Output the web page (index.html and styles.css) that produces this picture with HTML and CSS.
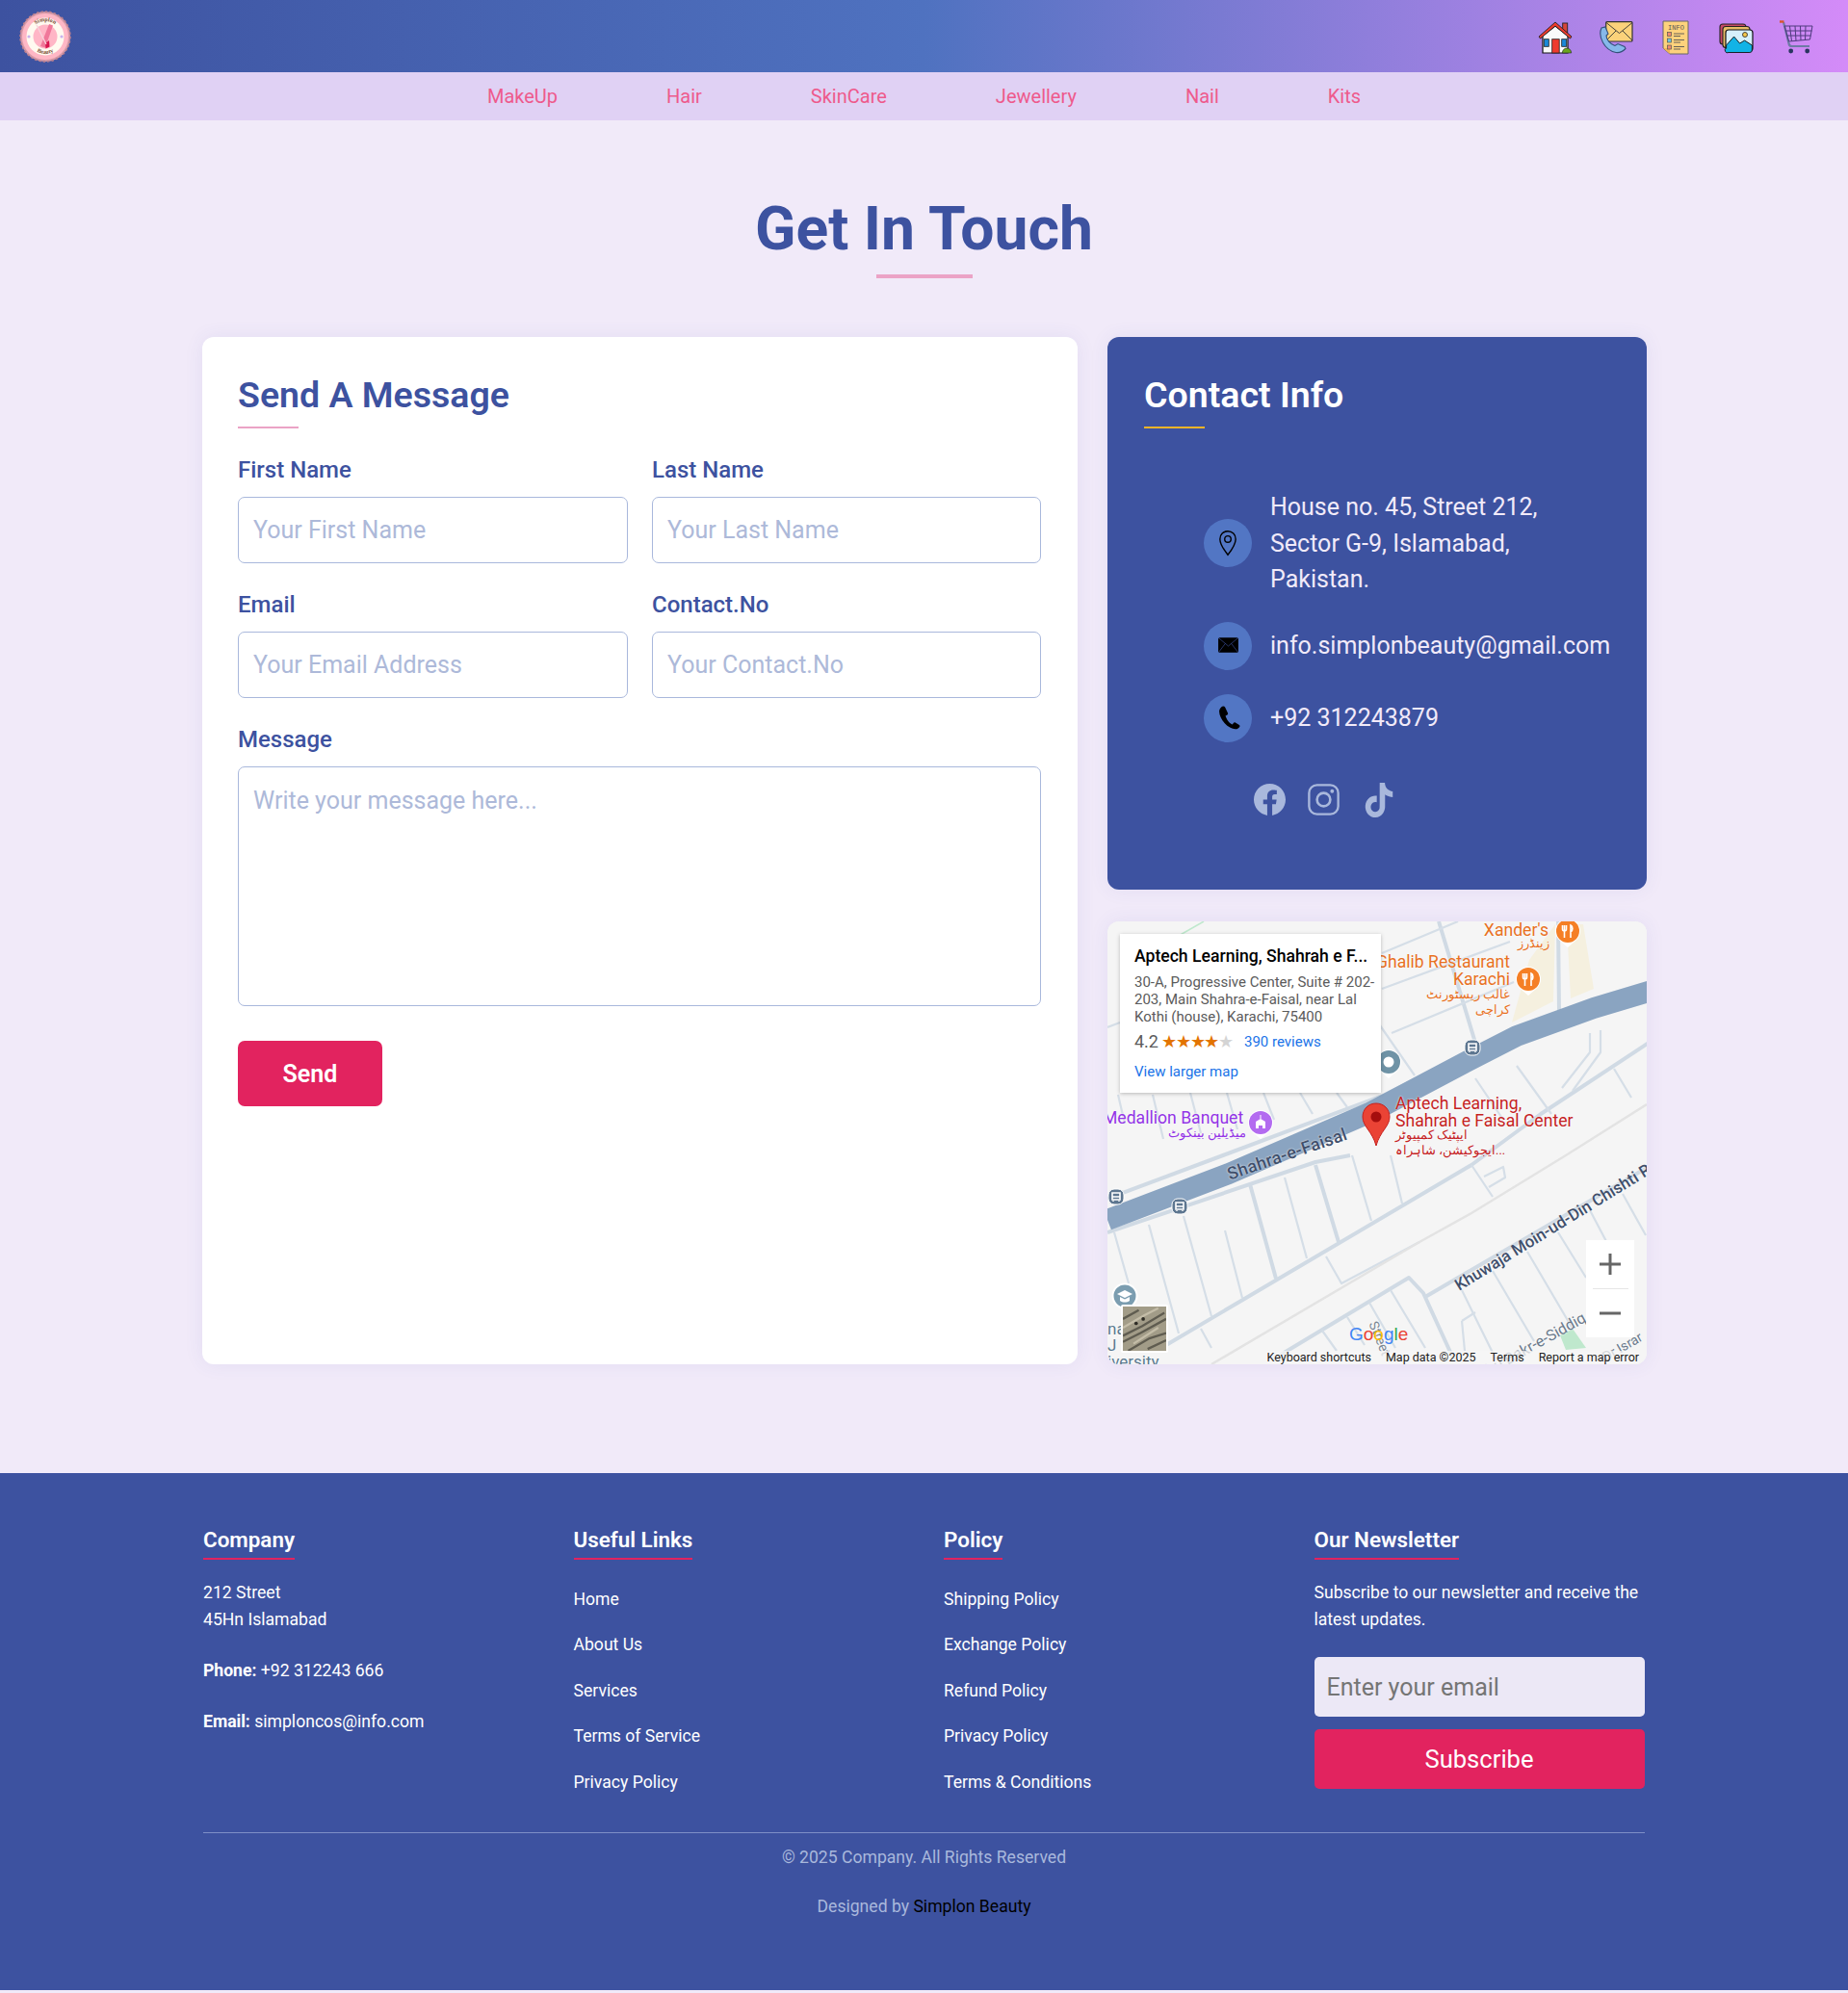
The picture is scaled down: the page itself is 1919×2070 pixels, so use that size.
FILE: index.html
```html
<!DOCTYPE html>
<html lang="en">
<head>
<meta charset="utf-8">
<title>Contact</title>
<link rel="stylesheet" href="styles.css">
</head>
<body>
<header class="topbar">
  <a class="logo" href="#" aria-label="Simplon Beauty">
    <svg viewBox="0 0 54 54" width="54" height="54">
      <defs>
        <path id="arcTop" d="M11 27a16 16 0 0 1 32 0"/>
        <path id="arcBot" d="M9 27a18 18 0 0 0 36 0"/>
      </defs>
      <circle cx="27" cy="27" r="26" fill="#d79aa8" stroke="#b97f8e" stroke-width="1.500" stroke-dasharray="2.500 2"/>
      <circle cx="27" cy="27" r="24" fill="#ffb7c5"/>
      <circle cx="27" cy="27" r="19.500" fill="#fffaf0"/>
      <circle cx="27" cy="27" r="12.500" fill="#ffb6c6"/>
      <path d="M31 14l4 1.500-8 23-5-1.500z" fill="#f0789a"/>
      <path d="M27 34l4-3 .5 6.500-4 2z" fill="#d8174f"/>
      <path d="M18 15l10 20" stroke="#f7d4dc" stroke-width="1.200" fill="none"/>
      <text class="logo-text"><textPath href="#arcTop" startOffset="50%">Simplon</textPath></text>
      <text class="logo-text"><textPath href="#arcBot" startOffset="50%">Beauty</textPath></text>
      <circle cx="10" cy="27" r="1.600" fill="#c9b2ee"/>
      <circle cx="44" cy="27" r="1.600" fill="#c9b2ee"/>
    </svg>
  </a>
  <nav class="topicons">
    <a href="#" aria-label="Home"><svg viewBox="0 0 36 36" width="36" height="36">
      <rect x="25.700" y="3" width="5" height="10" fill="#d6453a" stroke="#222" stroke-width=".9"/>
      <path d="M5 16v18h26V16L18 6z" fill="#fafafa" stroke="#111" stroke-width="1.200"/>
      <path d="M1 17L18 2l17 15-1.500 2L18 6 2.500 19z" fill="#ef3b2d" stroke="#222" stroke-width=".9"/>
      <rect x="14.700" y="19.700" width="7.500" height="14.300" fill="#ef3b2d" stroke="#222" stroke-width=".8"/>
      <rect x="6.300" y="19.700" width="5" height="7.600" fill="#1b88d8" stroke="#222" stroke-width=".8"/>
      <rect x="24.700" y="19.700" width="5" height="7.600" fill="#1b88d8" stroke="#222" stroke-width=".8"/>
      <path d="M25.300 34a4.700 5 0 0 1 9.400 0z" fill="#6aa51d" stroke="#222" stroke-width=".6"/>
    </svg></a>
    <a href="#" aria-label="Contact"><svg viewBox="0 0 36 36" width="36" height="36">
      <rect x="7.700" y="1.700" width="27.300" height="20.300" rx="1" fill="#fbd27a" stroke="#333" stroke-width="1.200"/>
      <path d="M8 2.500l13.500 11L35 2.500M8 21l10-10M35 21L25 11" fill="none" stroke="#333" stroke-width=".9"/>
      <path d="M3 8C-1 17 6 31 18 33.500c3 .5 7-1 10-4l-1-2-7-3-3 2C12 25 8 20 8 16l2-2-3-7z" fill="#86b8ea" stroke="#33507a" stroke-width="1.100"/>
    </svg></a>
    <a href="#" aria-label="Info"><svg viewBox="0 0 36 36" width="36" height="36">
      <path d="M5 1h26v34H12l-7-6z" fill="#fdd27c" stroke="#666" stroke-width="1"/>
      <path d="M5 29h7v6z" fill="#f3b458"/>
      <text class="info-text" x="18.500" y="9.500">INFO</text>
      <rect x="9.500" y="12.500" width="4" height="4" fill="#f08a70" stroke="#555" stroke-width=".7"/>
      <rect x="9.500" y="19" width="4" height="4" fill="#6fc7de" stroke="#555" stroke-width=".7"/>
      <rect x="9.500" y="26" width="4" height="4" fill="#f08a70" stroke="#555" stroke-width=".7"/>
      <path d="M16 14h11M16 16.500h7M16 20.500h11M16 23h7M16 27.500h11M16 30h7" stroke="#555" stroke-width=".9"/>
    </svg></a>
    <a href="#" aria-label="Gallery"><svg viewBox="0 0 36 36" width="36" height="36">
      <rect x="1" y="4" width="27" height="21" rx="3" fill="#c84a66" stroke="#222" stroke-width="1.100"/>
      <rect x="4" y="6.500" width="28" height="22" rx="3" fill="#e7bd66" stroke="#222" stroke-width="1.100"/>
      <rect x="7" y="10" width="28" height="22" rx="3" fill="#d6f0fb" stroke="#111" stroke-width="1.200"/>
      <path d="M7.600 29V26l8-9 6 7 5-3 7.800 5v5a2.500 2.500 0 0 1-2.500 2.500H10A2.500 2.500 0 0 1 7.600 29z" fill="#12b3e6" stroke="#111" stroke-width=".9"/>
      <circle cx="27" cy="15" r="2.500" fill="#f5c84b" stroke="#222" stroke-width=".8"/>
    </svg></a>
    <a href="#" aria-label="Cart"><svg viewBox="0 0 36 36" width="36" height="36">
      <path d="M5 2l5.500 22c.3 2 1 3 3 3H32" fill="none" stroke="#6e7aa6" stroke-width="2.200"/>
      <path d="M1 1.500h4.500" stroke="#d9552c" stroke-width="2.400"/>
      <path d="M6 6h29l-2.500 14-22 2zM11.500 6l2 15.700M17 6l1 15.300M22.500 6l.5 15M28 6l-.5 14.500M7.500 11h27M8.700 16h24.800" fill="none" stroke="#4e3a7e" stroke-width="1"/>
      <circle cx="12.700" cy="32" r="2.400" fill="#2a3560"/>
      <circle cx="29.700" cy="32" r="2.400" fill="#2a3560"/>
    </svg></a>
  </nav>
</header>
<nav class="catnav">
  <a href="#">MakeUp</a>
  <a href="#">Hair</a>
  <a href="#">SkinCare</a>
  <a href="#">Jewellery</a>
  <a href="#">Nail</a>
  <a href="#">Kits</a>
</nav>
<main class="contact">
  <h1 class="page-title">Get In Touch</h1>
  <div class="grid">
    <section class="card form-card">
      <h2 class="card-title">Send A Message</h2>
      <form class="form">
        <div class="field"><label>First Name</label><input type="text" placeholder="Your First Name"></div>
        <div class="field"><label>Last Name</label><input type="text" placeholder="Your Last Name"></div>
        <div class="field"><label>Email</label><input type="text" placeholder="Your Email Address"></div>
        <div class="field"><label>Contact.No</label><input type="text" placeholder="Your Contact.No"></div>
        <div class="field wide"><label>Message</label><textarea placeholder="Write your message here..."></textarea></div>
        <div class="wide"><button type="button" class="send">Send</button></div>
      </form>
    </section>
    <div class="side">
      <section class="card info-card">
        <h2 class="card-title light">Contact Info</h2>
        <ul class="info-list">
          <li><span class="bubble"><svg viewBox="0 0 24 24" width="28" height="28"><path d="M12 1.500C8 1.500 5 4.500 5 8.500c0 5 7 14 7 14s7-9 7-14c0-4-3-7-7-7z" fill="none" stroke="#000" stroke-width="1.200"/><circle cx="12" cy="8.500" r="2.800" fill="none" stroke="#000" stroke-width="1.200"/></svg></span><span>House no. 45, Street 212,<br>Sector G-9, Islamabad,<br>Pakistan.</span></li>
          <li><span class="bubble"><svg viewBox="0 0 24 24" width="25" height="25"><rect x="2" y="4" width="20" height="15" rx="1.500" fill="#000"/><path d="M2.500 4.500L12 12.500l9.500-8M2.500 18.500L9 10M21.500 18.500L15 10" fill="none" stroke="#3d52a0" stroke-width=".6"/></svg></span><span>info.simplonbeauty@gmail.com</span></li>
          <li><span class="bubble"><svg viewBox="0 0 24 24" width="27" height="27"><path d="M6.600 1.500c-1 .4-3 2-3 4.500 0 7 8 16.500 15 16.500 2 0 3.200-1 3.900-2.300.3-.6.100-1.200-.4-1.500l-3.600-2.200c-.6-.4-1.300-.2-1.700.3l-1.100 1.400c-3-1.300-5.500-5-6.300-8l1.600-.9c.6-.3.800-1 .6-1.600L9 2.300c-.4-.8-1.500-1.200-2.400-.8z" fill="#000"/></svg></span><span>+92 312243879</span></li>
        </ul>
        <div class="socials">
          <a href="#" aria-label="Facebook"><svg viewBox="0 0 24 24" width="33" height="33"><path d="M24 12.070C24 5.440 18.630.07 12 .07S0 5.440 0 12.070c0 5.990 4.390 10.950 10.130 11.850v-8.380H7.080v-3.470h3.050V9.430c0-3.010 1.790-4.670 4.530-4.670 1.310 0 2.690.23 2.690.23v2.950h-1.510c-1.490 0-1.960.93-1.960 1.870v2.260h3.330l-.53 3.470h-2.800v8.380C19.610 23.020 24 18.060 24 12.070z" fill="#a9b8dc"/></svg></a>
          <a href="#" aria-label="Instagram"><svg viewBox="0 0 24 24" width="33" height="33"><rect x="1" y="1" width="22" height="22" rx="6" fill="none" stroke="#a9b8dc" stroke-width="1.700"/><circle cx="12" cy="12" r="5" fill="none" stroke="#a9b8dc" stroke-width="1.900"/><circle cx="18.400" cy="5.600" r="1.400" fill="#a9b8dc"/></svg></a>
          <a class="tiktok" href="#" aria-label="TikTok"><svg viewBox="1 0 22 24" width="30" height="36" preserveAspectRatio="none"><path d="M12.530.02C13.840 0 15.140.01 16.440 0c.08 1.530.63 3.090 1.750 4.170 1.120 1.110 2.700 1.620 4.240 1.790v4.030c-1.440-.05-2.890-.35-4.200-.97-.57-.26-1.100-.59-1.620-.93-.01 2.920.01 5.840-.02 8.750-.08 1.400-.54 2.790-1.350 3.940-1.310 1.920-3.580 3.170-5.910 3.210-1.430.08-2.860-.31-4.080-1.030-2.020-1.190-3.440-3.370-3.650-5.710-.02-.5-.03-1-.01-1.490.18-1.900 1.120-3.720 2.580-4.960 1.660-1.440 3.980-2.130 6.150-1.720.02 1.480-.04 2.960-.04 4.440-.99-.32-2.150-.23-3.020.37-.63.41-1.110 1.040-1.360 1.750-.21.510-.15 1.070-.14 1.610.24 1.640 1.820 3.020 3.500 2.870 1.120-.01 2.190-.66 2.770-1.610.19-.33.4-.67.41-1.060.1-1.790.06-3.570.07-5.360.01-4.030-.01-8.050.02-12.070z" fill="#a9b8dc"/></svg></a>
        </div>
      </section>
      <section class="card map" aria-label="Map">
        <svg class="map-bg" viewBox="0 0 560 460" preserveAspectRatio="none">
          <rect width="560" height="460" fill="#f5f5f5"/>
          <path d="M420 105L463 83 465 3 438 40zM477 3H494L505 70 481 80z" fill="#f5f0df"/>
          <path d="M470 430L483 423 497 443 476 445z" fill="#bfe8cd"/>
          <path d="M100 0L65 20" fill="none" stroke="#bfe8cd" stroke-width="1.500"/>
          <g fill="none" stroke="#d0dae4" stroke-width="4" stroke-linejoin="round">
            <path d="M61 440L378 253L450 200L562 126"/>
            <path d="M0 323L216 250L252 243"/>
            <path d="M0 288L288 180L396 126L425 113"/>
            <path d="M148 273L175 371M216 253L240 333"/>
            <path d="M344 0L382 126M468 0L469 93"/>
            <path d="M180 450L313 370L328 386L360 456M330 390L565 253"/>
          </g>
          <g fill="none" stroke="#d5dee7" stroke-width="2.200" stroke-linejoin="round">
            <path d="M184 266L207 350M254 243L274 311M294 243L306 293M122 321L140 391M79 306L108 410M43 315L74 428M7 323L22 376M97 423L108 443"/>
            <path d="M227 348L243 376L324 333M378 253L400 286M391 265L411 255L413 266L396 276"/>
            <path d="M294 383L330 443M272 396L299 443M249 411L267 440M223 425L238 446M368 383L404 456M400 363L443 436M436 343L483 423M468 323L497 370M501 300L541 376M535 283L559 326"/>
            <path d="M368 415L382 406M368 415L371 446"/>
            <path d="M283 108L319 160M295 116L422 63M285 33L364 0M285 70L418 21M0 110L13 105"/>
            <path d="M11 180L18 210M47 180L58 226M86 178L97 220M124 178L135 216M162 178L173 206M200 178L213 200M238 178L249 193"/>
            <path d="M425 150L461 200M382 163L411 206M501 116L501 136L472 173M512 113L512 136L483 176M526 153L544 183"/>
          </g>
          <path d="M108 460L324 333L378 303L476 243L560 190" fill="none" stroke="#e3e3e3" stroke-width="2.500"/>
          <path d="M0 310L126 262L274 198L378 143L425 119L505 90L565 72" fill="none" stroke="#8aa4c1" stroke-width="22" stroke-linejoin="round"/>
        </svg>
        <div class="map-popup">
          <div class="place">Aptech Learning, Shahrah e F...</div>
          <div class="addr">30-A, Progressive Center, Suite # 202-203, Main Shahra-e-Faisal, near Lal Kothi (house), Karachi, 75400</div>
          <div class="rating"><span class="score">4.2</span><span class="stars">★★★★<span class="star-off">★</span></span><a href="#" class="reviews">390 reviews</a></div>
          <a href="#" class="larger">View larger map</a>
        </div>
        <span class="lab orange x1">Xander's</span>
        <span class="lab orange x1u">زینڈرز</span>
        <svg class="pin p1" viewBox="0 0 28 32"><path d="M14 31l-7-6a13 13 0 1 1 14 0z" fill="#fff"/><circle cx="14" cy="14" r="12" fill="#f57f25"/><path d="M8.500 8v4a2 2 0 0 0 4 0V8M10.500 8v13M17 21V8c2.500 1 2.500 6 0 7" fill="none" stroke="#fff" stroke-width="1.600"/></svg>
        <span class="lab orange x2">Ghalib Restaurant</span>
        <span class="lab orange x3">Karachi</span>
        <span class="lab orange x4">غالب ریسٹورنٹ<br>کراچی</span>
        <svg class="pin p2" viewBox="0 0 28 32"><path d="M14 31l-7-6a13 13 0 1 1 14 0z" fill="#fff"/><circle cx="14" cy="14" r="12" fill="#f57f25"/><path d="M8.500 8v4a2 2 0 0 0 4 0V8M10.500 8v13M17 21V8c2.500 1 2.500 6 0 7" fill="none" stroke="#fff" stroke-width="1.600"/></svg>
        <svg class="pin p3" viewBox="0 0 28 32"><path d="M14 31l-7-6a13 13 0 1 1 14 0z" fill="#fff"/><circle cx="14" cy="14" r="12" fill="#6f93a6"/><circle cx="14" cy="14" r="5.500" fill="#fff"/></svg>
        <span class="lab purple m1">Medallion Banquet</span>
        <span class="lab purple m2">میڈیلین بینکوٹ</span>
        <svg class="pin p4" viewBox="0 0 28 32"><path d="M14 31l-7-6a13 13 0 1 1 14 0z" fill="#fff"/><circle cx="14" cy="14" r="12" fill="#b36bf0"/><path d="M9 20v-7l5-3 5 3v7h-3v-3h-4v3zM13.500 6h1v4h-1z" fill="#fff"/></svg>
        <span class="lab red a1">Aptech Learning,<br>Shahrah e Faisal Center</span>
        <span class="lab red a2">ایپٹیک کمپیوٹر<br>ایجوکیشن، شاہراہ...</span>
        <svg class="marker" viewBox="0 0 30 46"><path d="M15 1C7 1 1 7 1 15c0 10 10 15 14 30 4-15 14-20 14-30C29 7 23 1 15 1z" fill="#ea4335" stroke="#c5221f"/><circle cx="15" cy="15" r="5.500" fill="#a50e0e"/></svg>
        <span class="road r1">Shahra-e-Faisal</span>
        <span class="road r2">Khuwaja Moin-ud-Din Chishti Rd</span>
        <span class="road r3">Abu Bakr-e-Siddiq</span>
        <span class="road r5">Dr Israr</span>
        <span class="road r4">Street</span>
        <svg class="bus b1" viewBox="0 0 18 18"><rect x="1" y="1" width="16" height="16" rx="6" fill="#5d7690" stroke="#fff"/><path d="M5 5h8v7H5z" fill="none" stroke="#fff" stroke-width="1.600"/><path d="M5 9h8M6 13v1M12 13v1" stroke="#fff" stroke-width="1.400"/></svg>
        <svg class="bus b2" viewBox="0 0 18 18"><rect x="1" y="1" width="16" height="16" rx="6" fill="#5d7690" stroke="#fff"/><path d="M5 5h8v7H5z" fill="none" stroke="#fff" stroke-width="1.600"/><path d="M5 9h8M6 13v1M12 13v1" stroke="#fff" stroke-width="1.400"/></svg>
        <svg class="bus b3" viewBox="0 0 18 18"><rect x="1" y="1" width="16" height="16" rx="6" fill="#5d7690" stroke="#fff"/><path d="M5 5h8v7H5z" fill="none" stroke="#fff" stroke-width="1.600"/><path d="M5 9h8M6 13v1M12 13v1" stroke="#fff" stroke-width="1.400"/></svg>
        <svg class="school" viewBox="0 0 28 28"><circle cx="14" cy="14" r="12.500" fill="#7b9db0" stroke="#fff" stroke-width="2"/><path d="M14 8l8 4-8 4-8-4zM9 15v4c3 2 7 2 10 0v-4l-5 2.500z" fill="#fff"/></svg>
        <span class="lab uni1">na<br>J<br>iversity</span>
        <svg class="satellite" viewBox="0 0 49 50" preserveAspectRatio="none"><rect width="49" height="50" fill="#a29c88"/><path d="M0 33L22 22 47 7M0 40L20 30 49 14M0 14L18 4M6 50L30 36 49 30M28 48L49 38" fill="none" stroke="#5f5c50" stroke-width="2.500"/><path d="M0 24L24 10 40 2M12 42L40 24" fill="none" stroke="#c4bda8" stroke-width="2.500"/><circle cx="15" cy="19" r="2" fill="#2e2c26"/><circle cx="23" cy="14" r="2" fill="#2e2c26"/></svg>
        <div class="zoom">
          <svg viewBox="0 0 50 50" width="50" height="50"><path d="M25 14v22M14 25h22" stroke="#666" stroke-width="3"/></svg>
          <i></i>
          <svg viewBox="0 0 50 50" width="50" height="50"><path d="M14 25h22" stroke="#666" stroke-width="3"/></svg>
        </div>
        <div class="google"><b class="g-b">G</b><b class="g-r">o</b><b class="g-y">o</b><b class="g-b">g</b><b class="g-g">l</b><b class="g-r">e</b></div>
        <div class="attrib"><span>Keyboard shortcuts</span><span>Map data ©2025</span><span>Terms</span><span>Report a map error</span></div>
      </section>
    </div>
  </div>
</main>
<footer class="footer">
  <div class="foot-cols">
    <div class="foot-col">
      <h3>Company</h3>
      <p>212 Street<br>45Hn Islamabad</p>
      <p><strong>Phone:</strong> +92 312243 666</p>
      <p><strong>Email:</strong> simploncos@info.com</p>
    </div>
    <div class="foot-col">
      <h3>Useful Links</h3>
      <ul><li>Home</li><li>About Us</li><li>Services</li><li>Terms of Service</li><li>Privacy Policy</li></ul>
    </div>
    <div class="foot-col">
      <h3>Policy</h3>
      <ul><li>Shipping Policy</li><li>Exchange Policy</li><li>Refund Policy</li><li>Privacy Policy</li><li>Terms &amp; Conditions</li></ul>
    </div>
    <div class="foot-col">
      <h3>Our Newsletter</h3>
      <p>Subscribe to our newsletter and receive the latest updates.</p>
      <input class="news-input" type="text" placeholder="Enter your email">
      <button type="button" class="subscribe">Subscribe</button>
    </div>
  </div>
  <div class="foot-bottom">
    <p>© 2025 Company. All Rights Reserved</p>
    <p class="designed">Designed by <a href="#">Simplon Beauty</a></p>
  </div>
</footer>
</body>
</html>
```
FILE: styles.css
```css
* { box-sizing: border-box; }
html, body { margin: 0; padding: 0; }
body { font-family: Roboto, "Noto Sans", sans-serif; background: #f1eaf9; color: #3d52a0; height: 2070px; overflow: hidden; }
a { text-decoration: none; color: inherit; }

.topbar { height: 75px; display: flex; align-items: center; justify-content: space-between; padding: 0 36px 0 20px; background: linear-gradient(90deg, #3d52a0 0%, #4f72c0 50%, #d48bf8 100%); }
.logo { display: flex; }
.logo-text { font: 700 6px "Liberation Serif", serif; fill: #7a4a32; text-anchor: middle; }
.topicons { display: flex; gap: 26.500px; align-items: center; margin-top: 3px; }
.topicons a { display: flex; width: 36px; }
.info-text { font: 500 7px "Liberation Mono", monospace; text-anchor: middle; fill: #555; }

.catnav { height: 50px; background: #e0d1f4; display: flex; justify-content: center; align-items: center; gap: 113px; font-size: 20px; color: #ee5a8c; }

.contact { padding: 75px 0 0; }
.page-title { margin: 0 auto; width: max-content; font-size: 62.400px; font-weight: 700; line-height: 75px; color: #3d52a0; text-align: center; }
.page-title::after { content: ""; display: block; width: 100px; height: 4px; margin: 10px auto 0; background: #eba3c6; }
.grid { margin: 61px 0 0 210px; width: 1500px; display: grid; grid-template-columns: 909px 560px; gap: 31px; }
.card { border-radius: 12px; box-shadow: 0 0 20px rgba(61, 82, 160, .08); }
.form-card { background: #fff; padding: 37px 38px 37px 37px; height: 1067px; }
.card-title { margin: 0; font-size: 37.500px; font-weight: 600; line-height: 46px; color: #3d52a0; }
.card-title::after { content: ""; display: block; width: 63px; height: 2px; margin-top: 10px; background: #eba3c6; }
.card-title.light { color: #fff; }
.card-title.light::after { background: #f0b429; }
.form { margin-top: 29px; display: grid; grid-template-columns: 405px 404px; column-gap: 25px; row-gap: 29px; }
.field label { display: block; font-size: 24px; font-weight: 500; line-height: 28px; margin-bottom: 14px; }
.field input, .field textarea { display: block; width: 100%; height: 69px; padding: 0 15px; font: 400 25px Roboto, sans-serif; border: 1.500px solid #a9b8dc; border-radius: 7px; color: #3d52a0; background: #fff; outline: none; }
.field textarea { height: 249px; padding: 20px 15px; resize: none; }
.field input::placeholder, .field textarea::placeholder { color: #adb9d9; opacity: 1; }
.wide { grid-column: 1 / -1; }
.send { width: 150px; height: 68px; margin-top: 7px; border: 0; border-radius: 7px; background: #e2235f; color: #fff; font: 600 25px Roboto, sans-serif; }

.side { display: flex; flex-direction: column; gap: 33px; }
.info-card { background: #3d52a0; padding: 37px 38px; height: 574px; color: #f1eaf9; }
.info-list { list-style: none; margin: 63px 0 0 62px; padding: 0; font-size: 25px; line-height: 37.500px; display: flex; flex-direction: column; gap: 25px; }
.info-list li { display: flex; align-items: center; gap: 19px; white-space: nowrap; }
.bubble { flex: none; width: 50px; height: 50px; border-radius: 50%; background: #5276c4; display: flex; align-items: center; justify-content: center; }
.socials { margin: 42px 0 0 114px; display: flex; gap: 23px; align-items: center; }
.socials a { display: flex; }
.tiktok { margin-left: 3px; }

.map { position: relative; height: 460px; overflow: hidden; background: #f5f5f5; }
.map-bg { position: absolute; inset: 0; width: 100%; height: 100%; }
.map-popup { position: absolute; left: 13px; top: 13px; width: 271px; height: 165px; background: #fff; padding: 12px 4px 0 15px; box-shadow: 0 1px 4px rgba(0, 0, 0, .25); color: #5b5b5b; font-size: 15px; line-height: 18px; z-index: 3; }
.place { font-size: 17.600px; font-weight: 500; line-height: 22px; color: #000; white-space: nowrap; margin-bottom: 7px; }
.rating { display: flex; align-items: center; margin-top: 6px; line-height: 22px; }
.score { font-size: 18px; }
.stars { color: #e37400; font-size: 18px; margin: 0 0 0 3px; letter-spacing: -1.200px; }
.star-off { color: #d4d4d4; }
.reviews { color: #1a73e8; font-size: 15px; margin-left: 12px; }
.larger { display: block; margin-top: 11px; color: #1a73e8; }
.lab { position: absolute; white-space: nowrap; font-size: 17.600px; line-height: 18px; text-shadow: 0 0 2px #fff; }
.orange { color: #e8711f; }
.purple { color: #9334e6; }
.red { color: #c5221f; }
.x1 { right: 102px; top: 0; }
.x1u { right: 101px; top: 14px; font-size: 13px; }
.x2 { right: 142px; top: 33px; }
.x3 { right: 142px; top: 51px; }
.x4 { right: 142px; top: 68px; font-size: 13px; line-height: 16px; text-align: right; }
.pin { position: absolute; width: 28px; height: 32px; z-index: 2; }
.p1 { left: 464px; top: -4px; }
.p2 { left: 423px; top: 46px; }
.p3 { left: 278px; top: 132px; }
.p4 { left: 145px; top: 195px; }
.m1 { left: -5px; top: 195px; }
.m2 { left: 63px; top: 211px; font-size: 12.500px; }
.a1 { left: 299px; top: 180px; }
.a2 { left: 299px; top: 214px; font-size: 12.500px; line-height: 16px; }
.marker { position: absolute; left: 263px; top: 188px; width: 32px; height: 46px; z-index: 2; }
.road { position: absolute; white-space: nowrap; font-size: 17px; font-weight: 500; color: #3f4f6b; text-shadow: 0 0 2px #fff; transform-origin: left center; }
.r1 { left: 125px; top: 252px; transform: rotate(-19deg); font-size: 18px; letter-spacing: .3px; }
.r2 { left: 362px; top: 369px; transform: rotate(-31.500deg); }
.r3 { left: 385px; top: 462px; transform: rotate(-29deg); font-size: 16px; font-weight: 400; color: #6b7a8c; }
.r4 { left: 276px; top: 408px; transform: rotate(68deg); font-size: 14px; font-weight: 400; color: #7b8794; }
.r5 { left: 515px; top: 445px; transform: rotate(-30deg); font-size: 14px; font-weight: 400; color: #6b7a8c; }
.bus { position: absolute; width: 18px; height: 18px; }
.b1 { left: 370px; top: 122px; }
.b2 { left: 0; top: 277px; }
.b3 { left: 66px; top: 287px; }
.school { position: absolute; left: 4px; top: 375px; width: 28px; height: 28px; }
.satellite { position: absolute; left: 14px; top: 398px; width: 49px; height: 50px; border: 2px solid #fff; border-radius: 2px; z-index: 2; }
.uni1 { left: 0; top: 415px; color: #5b7a90; font-size: 17px; line-height: 17px; }
.zoom { position: absolute; right: 13px; top: 331px; width: 50px; height: 101px; background: #fff; display: flex; flex-direction: column; align-items: center; z-index: 3; }
.zoom i { display: block; flex: none; width: 37px; height: 1px; background: #e6e6e6; }
.google { position: absolute; left: 251px; top: 418px; font-size: 19px; font-family: "Liberation Sans", sans-serif; }
.google b { font-weight: 400; }
.g-b { color: #4285f4; } .g-r { color: #ea4335; } .g-y { color: #fbbc05; } .g-g { color: #34a853; }
.attrib { position: absolute; right: 8px; bottom: 0; display: flex; gap: 15px; font-size: 12.500px; line-height: 14px; color: #222; white-space: nowrap; background: rgba(245, 245, 245, .75); z-index: 2; }

.footer { margin-top: 113px; height: 537px; background: #3d52a0; color: #fff; padding: 54px 0 0 211px; }
.foot-cols { width: 1497px; display: grid; grid-template-columns: 384.500px 384.500px 384.500px 343px; height: 319px; font-size: 17.600px; line-height: 28.160px; }
.foot-col h3 { margin: 0 0 20px; width: max-content; font-size: 22.400px; font-weight: 600; line-height: 30px; padding-bottom: 4px; border-bottom: 2px solid #e2235f; }
.foot-col p { margin: 0 0 25px; }
.foot-col ul { list-style: none; margin: 27px 0 0; padding: 0; display: flex; flex-direction: column; gap: 19.340px; }
.news-input { display: block; width: 100%; height: 62px; border: 0; border-radius: 5px; background: #ece8f6; padding: 0 13px; font: 400 25px Roboto, sans-serif; }
.news-input::placeholder { color: #757575; opacity: 1; }
.subscribe { display: block; width: 100%; height: 62px; margin-top: 13px; border: 0; border-radius: 5px; background: #e2235f; color: #fff; font: 400 25.600px Roboto, sans-serif; }
.foot-bottom { width: 1497px; border-top: 1px solid #7f8fc7; text-align: center; color: #a9b8dc; font-size: 17.600px; line-height: 26px; padding-top: 12px; }
.foot-bottom p { margin: 0; }
.foot-bottom .designed { margin-top: 25px; }
.designed a { color: #000; }
```
